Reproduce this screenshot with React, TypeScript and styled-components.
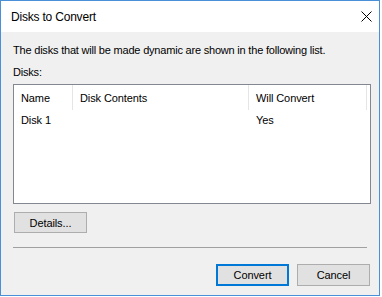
import styled, { createGlobalStyle } from "styled-components";

const GlobalStyle = createGlobalStyle`
  html, body {
    margin: 0;
    padding: 0;
    background: #ffffff;
  }
  body {
    font-family: "Liberation Sans", Arial, sans-serif;
    font-size: 11px;
    letter-spacing: -0.1px;
    color: #000000;
  }
`;

const Window = styled.div`
  width: 380px;
  height: 296px;
  box-sizing: border-box;
  border: 1px solid #4a90d9;
  background: #f0f0f0;
  display: flex;
  flex-direction: column;
  overflow: hidden;
`;

const TitleBar = styled.div`
  height: 31px;
  background: #ffffff;
  display: flex;
  align-items: center;
  justify-content: space-between;
  padding: 0 0 0 10px;
  flex-shrink: 0;
`;

const Title = styled.span`
  font-size: 12px;
  letter-spacing: -0.2px;
  margin-top: 1px;
`;

const Close = styled.div`
  width: 26px;
  height: 30px;
  display: flex;
  align-items: center;
  justify-content: center;
`;

const Body = styled.div`
  flex: 1;
  display: flex;
  flex-direction: column;
  padding: 10px 9px 0 12px;
`;

const Text = styled.div<{ $top?: number }>`
  line-height: 16px;
  white-space: nowrap;
  letter-spacing: -0.2px;
  margin-top: ${(p) => p.$top ?? 0}px;
`;

const ListBox = styled.div`
  margin-top: 4px;
  height: 120px;
  width: 358px;
  box-sizing: border-box;
  border: 1px solid #828790;
  background: #ffffff;
`;

const Grid = styled.div`
  display: grid;
  grid-template-columns: 59px 176px 118px;
`;

const HeadCell = styled.div`
  height: 25px;
  display: flex;
  align-items: center;
  padding-left: 7px;
  border-right: 1px solid #e5e5e5;
`;

const Cell = styled.div`
  height: 20px;
  display: flex;
  align-items: center;
  padding-left: 7px;
`;

const Button = styled.button<{ $primary?: boolean; $tall?: boolean }>`
  width: 73px;
  height: ${(p) => (p.$tall ? 22 : 21)}px;
  box-sizing: border-box;
  font-family: inherit;
  font-size: 11px;
  letter-spacing: -0.1px;
  line-height: 14px;
  color: #000000;
  background: #e1e1e1;
  border: ${(p) => (p.$primary ? "2px solid #0078d7" : "1px solid #adadad")};
  padding: 0;
  margin: 0;
`;

const DetailsRow = styled.div`
  margin-top: 8px;
  padding-left: 1px;
  display: flex;
`;

const Separator = styled.div`
  margin-top: 14px;
  width: 354px;
  height: 1px;
  background: #a0a0a0;
`;

const Footer = styled.div`
  margin-top: 16px;
  display: flex;
  justify-content: flex-end;
  gap: 8px;
`;

export default function App() {
  return (
    <>
      <GlobalStyle />
      <Window>
        <TitleBar>
          <Title>Disks to Convert</Title>
          <Close>
            <svg width="11" height="11" viewBox="0 0 11 11">
              <path d="M0.5 0.5 L10.5 10.5 M10.5 0.5 L0.5 10.5" stroke="#000" strokeWidth="1" />
            </svg>
          </Close>
        </TitleBar>
        <Body>
          <Text>The disks that will be made dynamic are shown in the following list.</Text>
          <Text $top={6}>Disks:</Text>
          <ListBox>
            <Grid>
              <HeadCell>Name</HeadCell>
              <HeadCell>Disk Contents</HeadCell>
              <HeadCell>Will Convert</HeadCell>
              <Cell>Disk 1</Cell>
              <Cell />
              <Cell>Yes</Cell>
            </Grid>
          </ListBox>
          <DetailsRow>
            <Button>Details...</Button>
          </DetailsRow>
          <Separator />
          <Footer>
            <Button $primary $tall>Convert</Button>
            <Button $tall>Cancel</Button>
          </Footer>
        </Body>
      </Window>
    </>
  );
}
